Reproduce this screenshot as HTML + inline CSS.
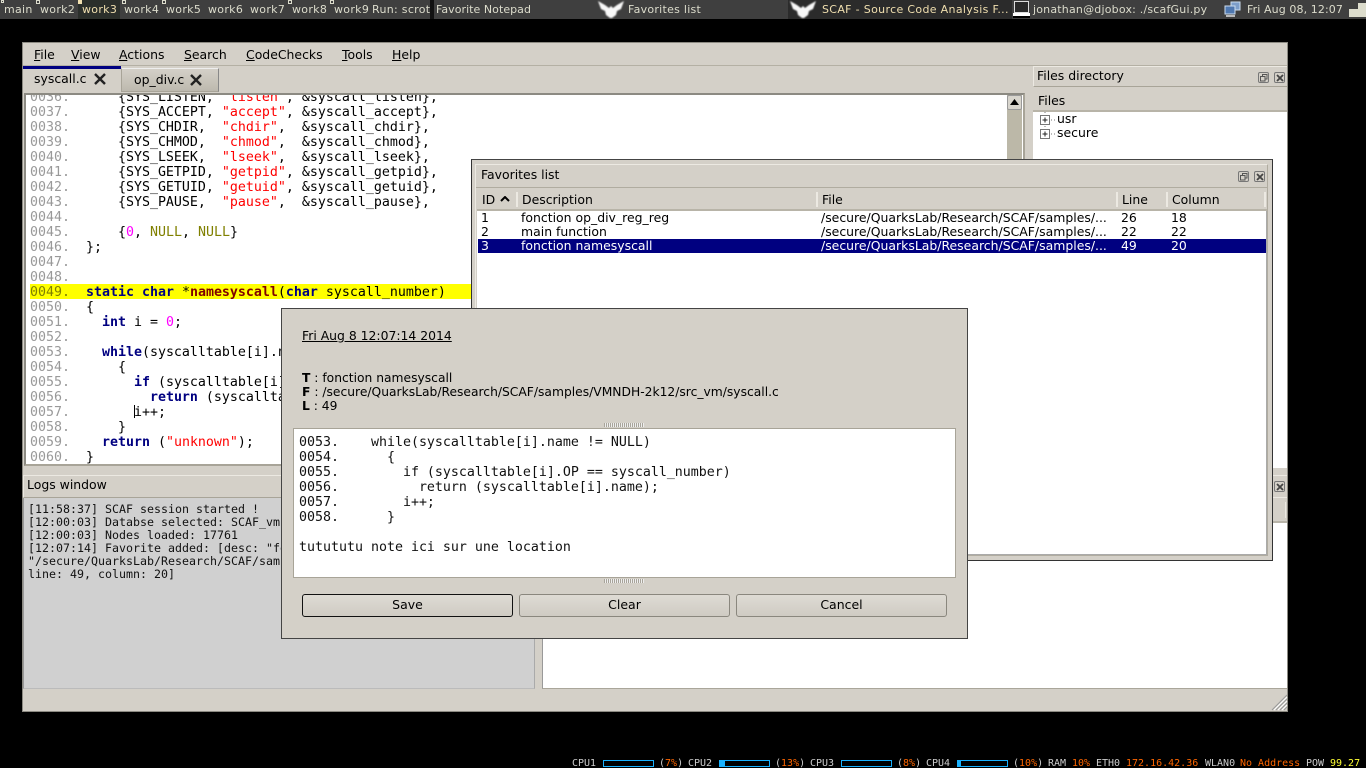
<!DOCTYPE html>
<html><head><meta charset="utf-8"><title>SCAF</title>
<style>
html,body{margin:0;padding:0;background:#000;width:1366px;height:768px;overflow:hidden}
*{box-sizing:border-box}
body{font-family:"DejaVu Sans","Liberation Sans",sans-serif;font-size:12.45px;color:#000;position:relative}
.a{position:absolute}
.t{position:absolute;white-space:pre;line-height:15px}
.top{position:absolute;left:0;top:0;width:1366px;height:19px;background:#3f3f3f;font-size:11px;color:#dcdccc;letter-spacing:.3px}
.top .t{top:2px}
.m{font-family:"DejaVu Sans Mono","Liberation Mono",monospace;font-size:13.29px;line-height:15px;white-space:pre}
.k{font-weight:bold;color:#000080}.s{color:#f00}.n{color:#808000}.d{color:#f0f}.f{font-weight:bold;color:#800000}.g{color:#999}
.bot{font-family:"DejaVu Sans Mono","Liberation Mono",monospace;font-size:10px;color:#ccc}
.bot .t{top:757px;line-height:14px}
.bar{position:absolute;top:760px;width:51px;height:7px;border:1px solid #1ab2ff}
.o{color:#f60}.y{color:#ff3}
.hd{position:absolute;height:21px;background:#d4d0c8;border-bottom:2px solid #b8b4a8}
.sep{position:absolute;width:2px;background:#ece9e2;top:3px;height:15px}
.btn{position:absolute;top:594px;width:211px;height:23px;border:1px solid #8a877e;border-radius:3px;background:linear-gradient(#dedbd4,#cfcbc3);text-align:center;line-height:20px;font-size:12.5px}
.ctl{position:absolute;width:11px;height:11px;border:1px solid #777;border-radius:2px;background:#d4d0c8}
.grip{position:absolute;width:40px;height:4px;background:repeating-linear-gradient(90deg,#a8a49a 0 1px,#eee 1px 2px)}
</style></head><body>

<div class="top">
<div class="a" style="left:78px;top:0;width:42px;height:19px;background:#2b2f2b"></div>
<div class="a" style="left:1px;top:0;width:3px;height:3px;border:1px solid #dcdccc"></div>
<div class="a" style="left:36px;top:0;width:4px;height:4px;border:1px solid #dcdccc"></div>
<div class="a" style="left:78px;top:0;width:4px;height:4px;background:#f0dfaf"></div>
<div class="a" style="left:122px;top:0;width:4px;height:4px;border:1px solid #dcdccc"></div>
<div class="a" style="left:162px;top:0;width:4px;height:4px;border:1px solid #dcdccc"></div>
<div class="a" style="left:288px;top:0;width:4px;height:4px;border:1px solid #dcdccc"></div>
<div class="a" style="left:330px;top:0;width:4px;height:4px;border:1px solid #dcdccc"></div>
<span class="t" style="left:4px">main</span>
<span class="t" style="left:40px">work2</span>
<span class="t" style="left:82px;color:#f0dfaf">work3</span>
<span class="t" style="left:124px">work4</span>
<span class="t" style="left:166px">work5</span>
<span class="t" style="left:208px">work6</span>
<span class="t" style="left:250px">work7</span>
<span class="t" style="left:292px">work8</span>
<span class="t" style="left:334px">work9</span>
<span class="t" style="left:372px">Run: scrot</span>
<div class="a" style="left:430px;top:0;width:4px;height:19px;background:#111"></div>
<span class="t" style="left:436px;letter-spacing:.05px">Favorite Notepad</span>
<svg class="a" style="left:596px;top:0;filter:blur(.7px)" width="30" height="19" viewBox="0 0 30 19"><path d="M2 1 L9 5 L13 8 L15 6 L17 8 L21 5 L28 1 L25 9 L21 11 L20 15 L16 18 L14 18 L10 15 L9 11 L5 9Z" fill="#f8f8f8"/></svg>
<span class="t" style="left:628px;letter-spacing:.27px">Favorites list</span>
<div class="a" style="left:788px;top:0;width:224px;height:19px;background:#2b2b2b"></div>
<svg class="a" style="left:788px;top:0;filter:blur(.7px)" width="30" height="19" viewBox="0 0 30 19"><path d="M2 1 L9 5 L13 8 L15 6 L17 8 L21 5 L28 1 L25 9 L21 11 L20 15 L16 18 L14 18 L10 15 L9 11 L5 9Z" fill="#f8f8f8"/></svg>
<span class="t" style="left:822px;color:#f0dfaf;letter-spacing:.33px">SCAF - Source Code Analysis F...</span>
<svg class="a" style="left:1012px;top:0" width="20" height="19" viewBox="0 0 20 19"><rect x="2.500" y="1.500" width="14" height="11" fill="#2a2a2a" stroke="#ddd"/><rect x="1" y="13" width="17" height="3" fill="#fff"/><rect x="1" y="16" width="17" height="2" fill="#000"/></svg>
<span class="t" style="left:1033px;letter-spacing:.2px">jonathan@djobox: ./scafGui.py</span>
<svg class="a" style="left:1224px;top:1" width="18" height="18" viewBox="0 0 18 18"><rect x="7" y="1" width="9" height="8" fill="#7d9ec9" stroke="#cde"/><rect x="1" y="5" width="10" height="8" fill="#4f78b0" stroke="#cde"/><rect x="2" y="14" width="9" height="2" fill="#bbb"/></svg>
<span class="t" style="left:1247px;letter-spacing:.1px">Fri Aug 08, 12:07</span>
<div class="a" style="left:1349px;top:9px;width:9px;height:8px;background:#dcdccc"></div>
<div class="a" style="left:1358px;top:3px;width:8px;height:14px;background:#dcdccc"></div>
</div>

<!-- main window -->
<div class="a" style="left:22px;top:42px;width:1266px;height:670px;background:#d4d0c8;border:1px solid #8c8a82"></div>
<div class="a" style="left:23px;top:65px;width:1264px;height:1px;background:#b4b0a4"></div>
<span class="t" style="left:34px;top:47px"><u>F</u>ile</span>
<span class="t" style="left:71px;top:47px"><u>V</u>iew</span>
<span class="t" style="left:119px;top:47px"><u>A</u>ctions</span>
<span class="t" style="left:184px;top:47px"><u>S</u>earch</span>
<span class="t" style="left:246px;top:47px"><u>C</u>odeChecks</span>
<span class="t" style="left:342px;top:47px"><u>T</u>ools</span>
<span class="t" style="left:392px;top:47px"><u>H</u>elp</span>

<!-- tabs -->
<div class="a" style="left:121px;top:68px;width:98px;height:24px;border:1px solid #a8a498;border-top:1px solid #eee;border-right:1px solid #888;background:linear-gradient(#d4d0c8,#bdb9ae)"></div>
<div class="a" style="left:23px;top:66px;width:98px;height:27px;background:#d4d0c8;border-top:3px solid #000080"></div>
<span class="t" style="left:34px;top:71px">syscall.c</span>
<span class="t" style="left:134px;top:72px">op_div.c</span>
<svg class="a" style="left:93px;top:73px" width="14" height="12" viewBox="0 0 14 12"><path d="M2 1 L12 11 M12 1 L2 11" stroke="#222" stroke-width="2.4"/></svg>
<svg class="a" style="left:189px;top:74px" width="14" height="12" viewBox="0 0 14 12"><path d="M2 1 L12 11 M12 1 L2 11" stroke="#222" stroke-width="2.4"/></svg>

<!-- editor -->
<div class="a" style="left:24px;top:93px;width:1001px;height:373px;background:#fff;border:2px solid #a8a498;border-top-color:#8c8a82;border-left-color:#8c8a82"></div>
<div class="a m" style="left:26px;top:95px;width:980px;height:369px;overflow:hidden">
<div class="a" style="left:4px;top:189px;width:976px;height:15px;background:#ff0"></div>
<div class="a" style="left:108px;top:310px;width:1px;height:13px;background:#000"></div>
<div class="a" style="left:4px;top:-5px"><span class="g">0036.</span>      {SYS_LISTEN, <span class="s">"listen"</span>, &amp;syscall_listen},
<span class="g">0037.</span>      {SYS_ACCEPT, <span class="s">"accept"</span>, &amp;syscall_accept},
<span class="g">0038.</span>      {SYS_CHDIR,  <span class="s">"chdir"</span>,  &amp;syscall_chdir},
<span class="g">0039.</span>      {SYS_CHMOD,  <span class="s">"chmod"</span>,  &amp;syscall_chmod},
<span class="g">0040.</span>      {SYS_LSEEK,  <span class="s">"lseek"</span>,  &amp;syscall_lseek},
<span class="g">0041.</span>      {SYS_GETPID, <span class="s">"getpid"</span>, &amp;syscall_getpid},
<span class="g">0042.</span>      {SYS_GETUID, <span class="s">"getuid"</span>, &amp;syscall_getuid},
<span class="g">0043.</span>      {SYS_PAUSE,  <span class="s">"pause"</span>,  &amp;syscall_pause},
<span class="g">0044.</span>
<span class="g">0045.</span>      {<span class="d">0</span>, <span class="n">NULL</span>, <span class="n">NULL</span>}
<span class="g">0046.</span>  };
<span class="g">0047.</span>
<span class="g">0048.</span>
<span style="color:#808000">0049.</span>  <span class="k">static</span> <span class="k">char</span> *<span class="f">namesyscall</span>(<span class="k">char</span> syscall_number)
<span class="g">0050.</span>  {
<span class="g">0051.</span>    <span class="k">int</span> i = <span class="d">0</span>;
<span class="g">0052.</span>
<span class="g">0053.</span>    <span class="k">while</span>(syscalltable[i].name != NULL)
<span class="g">0054.</span>      {
<span class="g">0055.</span>        <span class="k">if</span> (syscalltable[i].OP == syscall_number)
<span class="g">0056.</span>          <span class="k">return</span> (syscalltable[i].name);
<span class="g">0057.</span>        i++;
<span class="g">0058.</span>      }
<span class="g">0059.</span>    <span class="k">return</span> (<span class="s">"unknown"</span>);
<span class="g">0060.</span>  }</div>
</div>
<!-- scrollbar -->
<div class="a" style="left:1007px;top:95px;width:15px;height:369px;background:#bcb8a8"></div>
<div class="a" style="left:1007px;top:95px;width:15px;height:15px;background:#d8d5cd;border:1px solid #999;border-radius:2px"></div>
<svg class="a" style="left:1010px;top:99px" width="9" height="6"><path d="M4.5 0 L9 6 L0 6Z" fill="#000"/></svg>

<!-- files dock -->
<div class="a" style="left:1033px;top:66px;width:254px;height:21px;border:1px solid #ece9e2;border-right:0;border-bottom:1px solid #a8a498"></div>
<span class="t" style="left:1037px;top:68px">Files directory</span>
<div class="ctl" style="left:1258px;top:72px"></div>
<div class="ctl" style="left:1274px;top:72px"></div>
<svg class="a" style="left:1260px;top:74px" width="8" height="8"><rect x="2.5" y=".5" width="4.5" height="4.5" fill="none" stroke="#555"/><rect x=".5" y="2.5" width="4.5" height="4.5" fill="#d4d0c8" stroke="#555"/></svg>
<svg class="a" style="left:1276px;top:74px" width="8" height="8"><path d="M1 1L7 7M7 1L1 7" stroke="#444" stroke-width="1.8"/></svg>
<div class="a" style="left:1033px;top:90px;width:254px;height:22px;background:#d4d0c8;border-bottom:2px solid #b8b4a8"></div>
<span class="t" style="left:1038px;top:93px">Files</span>
<div class="a" style="left:1033px;top:112px;width:254px;height:356px;background:#fff"></div>
<svg class="a" style="left:1039px;top:112px" width="18" height="30"><g fill="none" stroke="#222"><rect x="1.500" y="3.500" width="9" height="9" stroke="#777"/><rect x="1.500" y="17.500" width="9" height="9" stroke="#777"/><path d="M3.500 8h5M6 5.500v5M3.500 22h5M6 19.500v5"/></g><path d="M12 8h1M15 8h1M12 22h1M15 22h1M6 0v1M6 14v1" stroke="#777" fill="none"/></svg>
<span class="t" style="left:1057px;top:111px">usr</span>
<span class="t" style="left:1057px;top:125px">secure</span>

<!-- lower right region -->
<div class="a" style="left:535px;top:466px;width:7px;height:223px;background:#d4d0c8"></div>
<div class="a" style="left:542px;top:521px;width:745px;height:168px;background:#fff;border-top:2px solid #b8b4a8;border-left:1px solid #999;border-bottom:1px solid #aaa69a"></div>
<div class="a" style="left:1273px;top:475px;width:14px;height:1px;background:#ece9e2"></div>
<div class="a" style="left:1273px;top:497px;width:14px;height:1px;background:#ece9e2"></div>
<div class="ctl" style="left:1274px;top:481px"></div>
<svg class="a" style="left:1276px;top:483px" width="8" height="8"><path d="M1 1L7 7M7 1L1 7" stroke="#444" stroke-width="1.8"/></svg>
<div class="a" style="left:1285px;top:502px;width:1px;height:16px;background:#ece9e2"></div>
<svg class="a" style="left:1271px;top:694px" width="17" height="17"><path d="M16 1L1 16M16 5L5 16M16 9L9 16M16 13L13 16" stroke="#999" fill="none"/><path d="M16 3L3 16M16 7L7 16M16 11L11 16" stroke="#fff" fill="none"/></svg>

<!-- logs -->
<div class="a" style="left:23px;top:475px;width:512px;height:23px;border:1px solid #ece9e2;border-bottom:1px solid #a8a498;background:#d4d0c8"></div>
<span class="t" style="left:27px;top:477px">Logs window</span>
<div class="a" style="left:23px;top:498px;width:512px;height:191px;background:#d0d0d0;border-left:1px solid #999;border-right:1px solid #aaa;border-bottom:1px solid #bbb"></div>
<div class="a m" style="left:28px;top:503px;width:506px;overflow:hidden;font-size:11.63px;line-height:13px;color:#111">[11:58:37] SCAF session started !
[12:00:03] Databse selected: SCAF_vmndh
[12:00:03] Nodes loaded: 17761
[12:07:14] Favorite added: [desc: "fonction namesyscall", file:
"/secure/QuarksLab/Research/SCAF/samples/VMNDH-2k12/src_vm/syscall.c",
line: 49, column: 20]</div>

<!-- favorites window -->
<div class="a" style="left:471px;top:159px;width:802px;height:402px;background:#d4d0c8;border:1px solid #333;border-top-color:#444"></div>
<div class="a" style="left:475px;top:164px;width:793px;height:392px;border:1px solid #b0aca0;border-top-color:#ece9e2;border-left-color:#ece9e2"></div>
<span class="t" style="left:481px;top:167px">Favorites list</span>
<div class="a" style="left:476px;top:187px;width:791px;height:1px;background:#b0aca0"></div>
<div class="ctl" style="left:1238px;top:171px"></div>
<div class="ctl" style="left:1254px;top:171px"></div>
<svg class="a" style="left:1240px;top:173px" width="8" height="8"><rect x="2.5" y=".5" width="4.5" height="4.5" fill="none" stroke="#555"/><rect x=".5" y="2.5" width="4.5" height="4.5" fill="#d4d0c8" stroke="#555"/></svg>
<svg class="a" style="left:1256px;top:173px" width="8" height="8"><path d="M1 1L7 7M7 1L1 7" stroke="#444" stroke-width="1.8"/></svg>
<div class="a" style="left:477px;top:211px;width:790px;height:344px;background:#fff;border-right:1px solid #aaa;border-bottom:1px solid #aaa"></div>
<div class="hd" style="left:477px;top:189px;width:790px;height:22px"></div>
<span class="sep a" style="left:516px;top:192px"></span>
<span class="sep a" style="left:816px;top:192px"></span>
<span class="sep a" style="left:1116px;top:192px"></span>
<span class="sep a" style="left:1166px;top:192px"></span>
<span class="sep a" style="left:1264px;top:192px"></span>
<span class="t" style="left:482px;top:192px">ID</span>
<svg class="a" style="left:500px;top:196px" width="10" height="6"><path d="M1 5L5 1L9 5" fill="none" stroke="#000" stroke-width="2"/></svg>
<span class="t" style="left:522px;top:192px">Description</span>
<span class="t" style="left:822px;top:192px">File</span>
<span class="t" style="left:1122px;top:192px">Line</span>
<span class="t" style="left:1172px;top:192px">Column</span>
<div class="a" style="left:478px;top:239px;width:788px;height:14px;background:#000080"></div>
<span class="t" style="left:481px;top:210px">1</span><span class="t" style="left:521px;top:210px">fonction op_div_reg_reg</span><span class="t" style="left:821px;top:210px">/secure/QuarksLab/Research/SCAF/samples/...</span><span class="t" style="left:1121px;top:210px">26</span><span class="t" style="left:1171px;top:210px">18</span>
<span class="t" style="left:481px;top:224px">2</span><span class="t" style="left:521px;top:224px">main function</span><span class="t" style="left:821px;top:224px">/secure/QuarksLab/Research/SCAF/samples/...</span><span class="t" style="left:1121px;top:224px">22</span><span class="t" style="left:1171px;top:224px">22</span>
<span class="t" style="left:481px;top:238px;color:#fff">3</span><span class="t" style="left:521px;top:238px;color:#fff">fonction namesyscall</span><span class="t" style="left:821px;top:238px;color:#fff">/secure/QuarksLab/Research/SCAF/samples/...</span><span class="t" style="left:1121px;top:238px;color:#fff">49</span><span class="t" style="left:1171px;top:238px;color:#fff">20</span>

<!-- dialog -->
<div class="a" style="left:281px;top:308px;width:687px;height:331px;background:#d4d0c8;border:1px solid #444"></div>
<span class="t" style="left:302px;top:328px;font-size:12.4px;text-decoration:underline">Fri Aug 8 12:07:14 2014</span>
<span class="t" style="left:302px;top:371px;font-size:12.3px"><b>T</b> : fonction namesyscall</span>
<span class="t" style="left:302px;top:385px;font-size:12.3px"><b>F</b> : /secure/QuarksLab/Research/SCAF/samples/VMNDH-2k12/src_vm/syscall.c</span>
<span class="t" style="left:302px;top:399px;font-size:12.3px"><b>L</b> : 49</span>
<div class="grip" style="left:604px;top:423px"></div>
<div class="a" style="left:293px;top:428px;width:663px;height:150px;background:#fff;border:1px solid #a8a498"></div>
<div class="a m" style="left:299px;top:435px;color:#111">0053.    while(syscalltable[i].name != NULL)
0054.      {
0055.        if (syscalltable[i].OP == syscall_number)
0056.          return (syscalltable[i].name);
0057.        i++;
0058.      }

tutututu note ici sur une location</div>
<div class="grip" style="left:604px;top:579px"></div>
<div class="btn" style="left:302px;border-color:#111">Save</div>
<div class="btn" style="left:519px">Clear</div>
<div class="btn" style="left:736px">Cancel</div>

<!-- bottom bar -->
<div class="bot">
<span class="t" style="left:572px">CPU1</span><div class="bar" style="left:603px"></div><span class="t" style="left:659px">(<span class="o">7%</span>)</span>
<span class="t" style="left:688px">CPU2</span><div class="bar" style="left:719px"><div style="width:5px;height:5px;background:#1ab2ff"></div></div><span class="t" style="left:775px">(<span class="o">13%</span>)</span>
<span class="t" style="left:810px">CPU3</span><div class="bar" style="left:841px"></div><span class="t" style="left:897px">(<span class="o">8%</span>)</span>
<span class="t" style="left:926px">CPU4</span><div class="bar" style="left:957px"><div style="width:3px;height:5px;background:#1ab2ff"></div></div><span class="t" style="left:1013px">(<span class="o">10%</span>)</span>
<span class="t" style="left:1048px">RAM</span><span class="t o" style="left:1072px">10%</span>
<span class="t" style="left:1096px">ETH0</span><span class="t o" style="left:1126px">172.16.42.36</span>
<span class="t" style="left:1205px">WLAN0</span><span class="t o" style="left:1240px">No Address</span>
<span class="t" style="left:1306px">POW</span><span class="t y" style="left:1330px">99.27</span>
</div>
</body></html>
